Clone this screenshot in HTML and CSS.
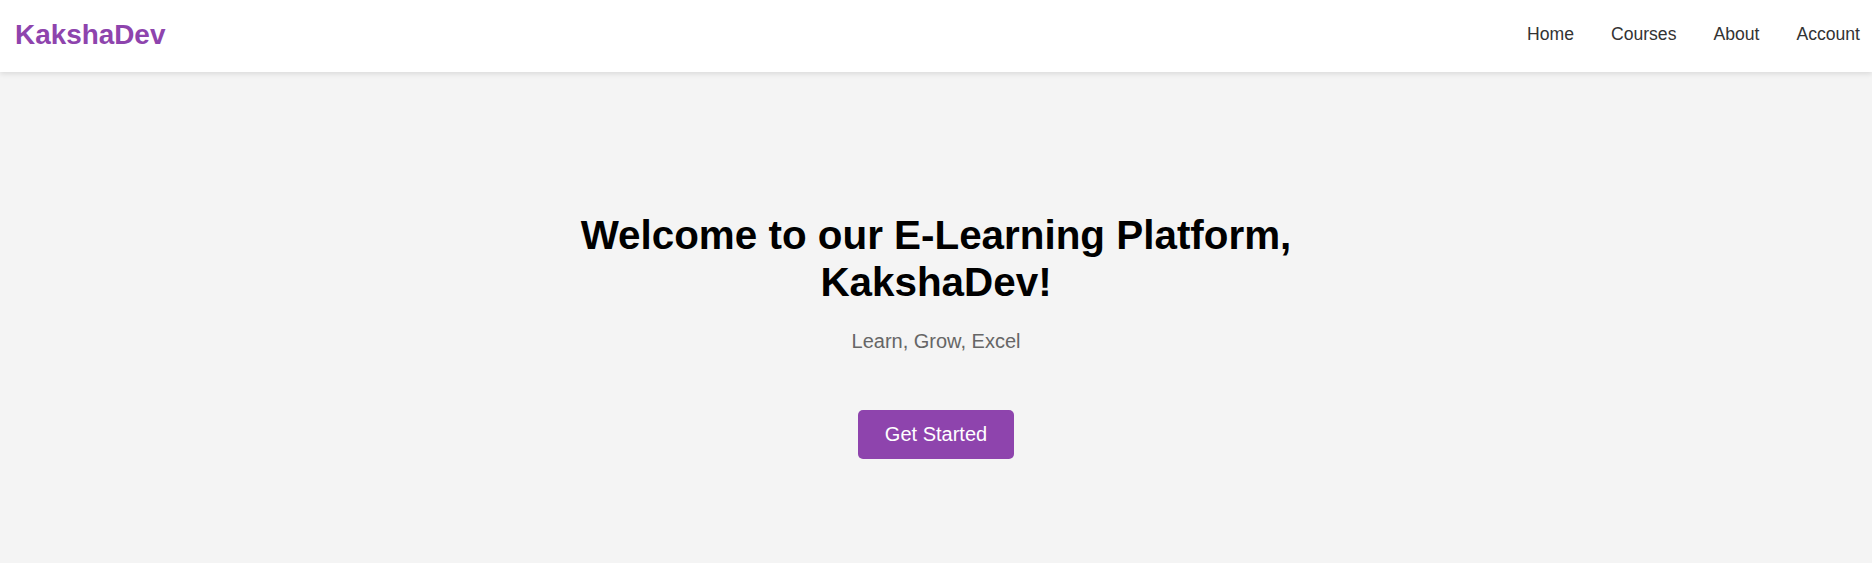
FILE: index.html
```html
<!DOCTYPE html>
<html lang="en">
<head>
<meta charset="utf-8">
<title>KakshaDev</title>
<link rel="stylesheet" href="styles.css">
</head>
<body>
<header class="site-header">
  <div class="logo">KakshaDev</div>
  <nav class="nav">
    <a href="#" class="nav-link">Home</a>
    <a href="#" class="nav-link">Courses</a>
    <a href="#" class="nav-link">About</a>
    <a href="#" class="nav-link">Account</a>
  </nav>
</header>
<main class="hero">
  <div class="hero-inner">
    <h1 class="hero-title">Welcome to our E-Learning Platform, KakshaDev!</h1>
    <p class="hero-sub">Learn, Grow, Excel</p>
    <a href="#" class="btn">Get Started</a>
  </div>
</main>
</body>
</html>
```

FILE: styles.css
```css
* { box-sizing: border-box; }
html, body { height: 100%; }
body {
  margin: 0;
  font-family: "Liberation Sans", Arial, sans-serif;
  background: #f4f4f4;
  color: #333;
}
.site-header {
  position: relative;
  z-index: 1;
  height: 72px;
  padding: 0 12px 3px 15px;
  background: #fff;
  display: flex;
  align-items: center;
  justify-content: space-between;
  box-shadow: 0 2px 5px rgba(0, 0, 0, 0.1);
}
.logo {
  font-size: 27.9px;
  font-weight: bold;
  color: #8e44ad;
}
.nav {
  display: flex;
  gap: 37px;
}
.nav-link {
  font-size: 17.6px;
  color: #333;
  text-decoration: none;
}
.hero {
  padding: 140px 20px 60px;
  text-align: center;
}
.hero-inner {
  max-width: 800px;
  margin: 0 auto;
}
.hero-title {
  margin: 0;
  font-size: 40.4px;
  line-height: 47px;
  font-weight: bold;
  color: #000;
}
.hero-sub {
  margin: 24px 0 57px;
  font-size: 20px;
  color: #666;
}
.btn {
  display: inline-block;
  padding: 13px 27px;
  font-size: 20px;
  line-height: 23px;
  color: #fff;
  background: #8e44ad;
  border-radius: 5px;
  text-decoration: none;
}
```
